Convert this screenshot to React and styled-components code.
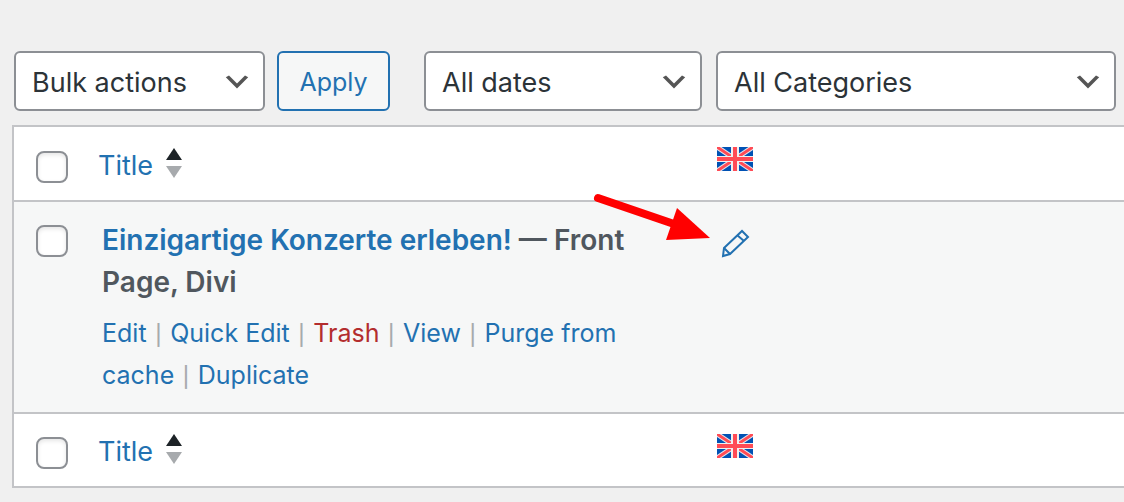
import React from "react";
import styled, { createGlobalStyle } from "styled-components";

const GlobalStyle = createGlobalStyle`
  body {
    margin: 0;
    background: #f0f0f0;
    color: #2c3338;
    font-family: Inter, "Liberation Sans", sans-serif;
    font-size: 27px;
    line-height: 42px;
  }
`;

const Page = styled.main`
  overflow: hidden;
  padding: 51px 0 14px 12px;
`;

const Toolbar = styled.form`
  display: flex;
  gap: 14px;
  padding: 0 8px 0 2px;
`;

const BulkActions = styled.div`
  display: flex;
  gap: 12px;
  margin-right: 20px;
`;

const SelectBox = styled.div`
  position: relative;
  flex: ${(props) => props.$grow || "none"};
  width: ${(props) => props.$width || "auto"};
`;

const SelectInput = styled.select`
  display: block;
  appearance: none;
  width: 100%;
  height: 60px;
  margin: 0;
  padding: 3px 48px 0 16px;
  background: #fff;
  color: #2c3338;
  border: 2px solid #8c8f94;
  border-radius: 6px;
  font: inherit;
`;

const Chevron = styled.svg`
  position: absolute;
  top: 15px;
  right: 12px;
  width: 32px;
  height: 32px;
  fill: #555;
  pointer-events: none;
`;

const Button = styled.button`
  height: 60px;
  width: 113px;
  padding: 2px 0 0;
  background: #f6f7f7;
  color: #2271b1;
  border: 2px solid #2271b1;
  border-radius: 6px;
  font: inherit;
  font-size: 25px;
  cursor: pointer;
`;

const Table = styled.table`
  box-sizing: border-box;
  width: 100%;
  margin-top: 14px;
  table-layout: fixed;
  border-spacing: 0;
  background: #fff;
  border: 2px solid #c3c4c7;
  border-right: 0;
`;

const CheckColumn = styled.col`
  width: 68px;
`;

const TitleColumn = styled.col`
  width: 55%;
`;

const HeadCell = styled.th`
  box-sizing: border-box;
  padding: ${(props) => props.$padding};
  text-align: left;
  vertical-align: top;
  font-weight: 400;
`;

const HeadRow = styled.tr`
  thead & > th {
    border-bottom: 2px solid #c3c4c7;
    height: 75px;
  }

  tfoot & > th {
    border-top: 2px solid #c3c4c7;
    height: 74px;
  }
`;

const Row = styled.tr`
  background: #f6f7f7;
`;

const Cell = styled.td`
  padding: ${(props) => props.$padding || "17px 48px 16px 20px"};
  vertical-align: top;
`;

const Checkbox = styled.input`
  display: block;
  appearance: none;
  box-sizing: border-box;
  width: 32px;
  height: 32px;
  margin: 0;
  background: #fff;
  border: 2px solid #8c8f94;
  border-radius: 8px;
  box-shadow: inset 0 2px 4px rgba(0, 0, 0, 0.1);
`;

const SortLink = styled.a`
  display: flex;
  align-items: center;
  gap: 13px;
  width: fit-content;
  color: #2271b1;
  text-decoration: none;
`;

const SortArrows = styled.svg`
  width: 16px;
  height: 30px;
  margin-bottom: 6px;
`;

const FlagIcon = styled.svg`
  display: block;
  width: 36px;
  height: 24px;
`;

const RowTitle = styled.strong`
  display: block;
  color: #50575e;
  font-size: 28px;
  font-weight: 600;
`;

const TitleLink = styled.a`
  color: #2271b1;
  text-decoration: none;
`;

const RowActions = styled.div`
  padding-top: 9px;
  font-size: 25px;
`;

const ActionLink = styled.a`
  color: ${(props) => (props.$danger ? "#b32d2e" : "#2271b1")};
  text-decoration: none;
`;

const Separator = styled.span`
  padding: 0 3px;
  color: #a7aaad;
  font-size: 20px;
  font-weight: 500;
  line-height: 1;
`;

const EditLink = styled.a`
  display: block;
  position: relative;
  width: 36px;
  height: 36px;
`;

const PencilIcon = styled.svg`
  display: block;
  width: 36px;
  height: 36px;
`;

const Pointer = styled.svg`
  position: absolute;
  top: -35px;
  right: 39px;
  width: 124px;
  height: 54px;
  pointer-events: none;
`;

const Select = ({ label, options, width, grow }) => (
  <SelectBox $width={width} $grow={grow}>
    <SelectInput aria-label={label}>
      {options.map((option) => (
        <option key={option}>{option}</option>
      ))}
    </SelectInput>
    <Chevron viewBox="0 0 20 20" aria-hidden="true">
      <path d="M5 6l5 5 5-5 2 1-7 7-7-7 2-1z" />
    </Chevron>
  </SelectBox>
);

const Flag = () => (
  <FlagIcon viewBox="0 0 36 24" role="img" aria-label="English">
    <path fill="#0052b4" d="M0 0h36v24H0z" />
    <path stroke="#e4e8ee" strokeWidth="5" d="M0 0l36 24M36 0L0 24" />
    <path stroke="#ff4b55" strokeWidth="3" d="M0 0l36 24M36 0L0 24" />
    <path fill="#f0f0f0" d="M14 0h8v9h14v6H22v9h-8v-9H0V9h14z" />
    <path fill="#ff4b55" d="M16 0h4v10h16v4H20v10h-4V14H0v-4h16z" />
  </FlagIcon>
);

const actions = [
  { name: "Edit", href: "#edit" },
  { name: "Quick Edit", href: "#quick-edit" },
  { name: "Trash", href: "#trash", danger: true },
  { name: "View", href: "#view" },
  { name: "Purge from cache", href: "#purge" },
  { name: "Duplicate", href: "#duplicate" },
];

const HeadingRow = ({ foot }) => (
  <HeadRow>
    <HeadCell $padding={foot ? "23px 0 0 22px" : "24px 0 0 22px"}>
      <Checkbox type="checkbox" aria-label="Select all" />
    </HeadCell>
    <HeadCell scope="col" $padding={foot ? "17px 0 0 16px" : "18px 0 0 16px"}>
      <SortLink href="#title">
        Title
        <SortArrows viewBox="0 0 16 30" aria-hidden="true">
          <path fill="#1d2327" d="M8 0l8 12H0z" />
          <path fill="#a7aaad" d="M0 18h16L8 30z" />
        </SortArrows>
      </SortLink>
    </HeadCell>
    <HeadCell scope="col" $padding="20px 0 0 24px">
      <Flag />
    </HeadCell>
  </HeadRow>
);

const App = () => (
  <Page>
    <GlobalStyle />
    <Toolbar>
      <BulkActions>
        <Select
          label="Bulk actions"
          options={["Bulk actions", "Edit", "Move to Trash"]}
          width="251px"
        />
        <Button type="button">Apply</Button>
      </BulkActions>
      <Select label="Filter by date" options={["All dates"]} width="278px" />
      <Select
        label="Filter by category"
        options={["All Categories"]}
        grow="1"
      />
    </Toolbar>
    <Table>
      <colgroup>
        <CheckColumn />
        <TitleColumn />
        <col />
      </colgroup>
      <thead>
        <HeadingRow />
      </thead>
      <tbody>
        <Row>
          <Cell $padding="23px 0 0 22px">
            <Checkbox
              type="checkbox"
              aria-label="Select Einzigartige Konzerte erleben!"
            />
          </Cell>
          <Cell>
            <RowTitle>
              <TitleLink href="#edit">Einzigartige Konzerte erleben!</TitleLink>{" "}
              — Front Page, Divi
            </RowTitle>
            <RowActions>
              {actions.map((action, index) => (
                <React.Fragment key={action.name}>
                  {index > 0 && <Separator>{" | "}</Separator>}
                  <ActionLink href={action.href} $danger={action.danger}>
                    {action.name}
                  </ActionLink>
                </React.Fragment>
              ))}
            </RowActions>
          </Cell>
          <Cell $padding="23px 0 0 24px">
            <EditLink href="#translation" aria-label="Edit the translation">
              <PencilIcon viewBox="0 0 36 36" aria-hidden="true">
                <g fill="none" stroke="#2271b1" strokeWidth="2">
                  <path d="M6 31l1-8L25 6l6 6-18 17z" />
                  <path d="M20 10l7 6M7 23l6 6" />
                </g>
              </PencilIcon>
              <Pointer viewBox="590 190 124 54" aria-hidden="true">
                <path
                  stroke="#f00"
                  strokeWidth="8"
                  strokeLinecap="round"
                  d="M598 198l76 26"
                />
                <path fill="#f00" d="M710 238l-33-30-11 32z" />
              </Pointer>
            </EditLink>
          </Cell>
        </Row>
      </tbody>
      <tfoot>
        <HeadingRow foot />
      </tfoot>
    </Table>
  </Page>
);

export default App;
